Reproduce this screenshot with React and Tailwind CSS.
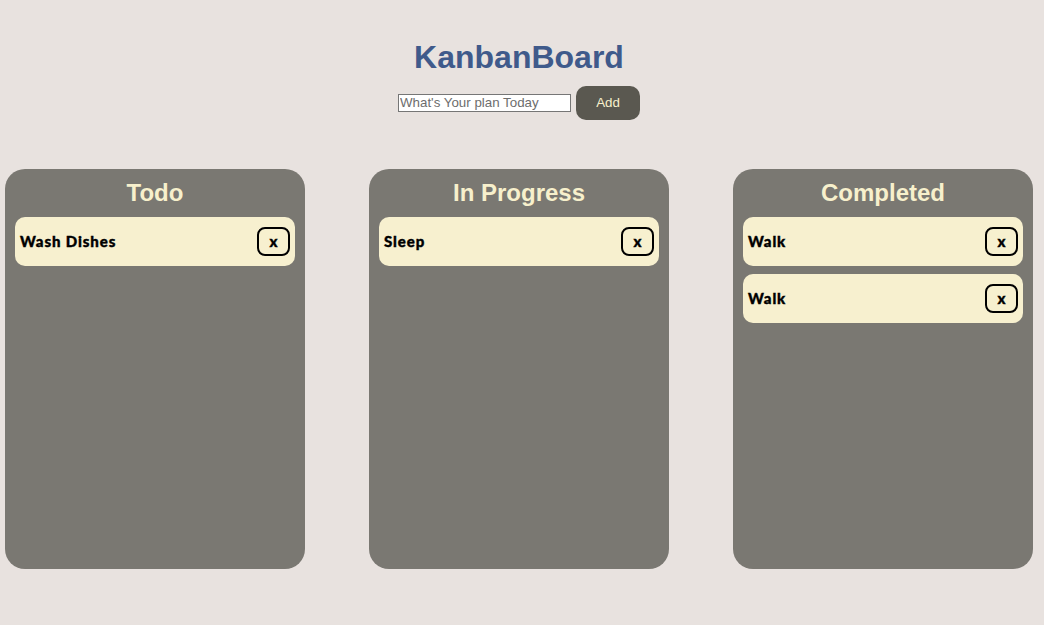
import React from "react";

function Card({ text }) {
  return (
    <div className="flex items-center justify-between h-[49px] rounded-[10px] bg-[#f7f0cf] pl-[5px] pr-[5px]">
      <span className="font-['Lato',sans-serif] font-black text-[15px] tracking-[0.06em] text-black [-webkit-text-stroke:0.4px_black]">{text}</span>
      <button className="w-[33px] h-[29px] border-2 border-black rounded-[8px] bg-transparent font-['Lato',sans-serif] font-black text-[15px] text-black flex items-center justify-center [-webkit-text-stroke:0.4px_black]">x</button>
    </div>
  );
}

function Column({ title, items }) {
  return (
    <div className="w-[300px] h-[400px] rounded-[20px] bg-[#7a7872] px-[10px] pt-[10px] flex flex-col">
      <h2 className="text-center font-['Liberation_Sans',Arial,sans-serif] font-bold text-[24px] leading-[28px] text-[#f7f0cc] mb-[10px]">{title}</h2>
      <div className="flex flex-col gap-[8px]">
        {items.map((t, i) => (
          <Card key={i} text={t} />
        ))}
      </div>
    </div>
  );
}

export default function App() {
  return (
    <div className="min-h-[625px] w-full bg-[#e8e2df] font-['Liberation_Sans',Arial,sans-serif]">
      <div className="w-[1038px]">
        <div className="flex flex-col items-center pt-[39px]">
          <h1 className="text-[32px] leading-[37px] font-bold text-[#3f5a8b]">KanbanBoard</h1>
          <div className="flex items-center gap-[5px] mt-[10px]">
            <input
              placeholder="What's Your plan Today"
              className="w-[173px] h-[18px] border border-[#767676] bg-white px-[1px] text-[13.33px] text-black placeholder:text-[#6d6d6d] outline-none"
            />
            <button className="w-[64px] h-[34px] rounded-[10px] bg-[#5a5850] text-[13.33px] text-[#f7f0cc]">Add</button>
          </div>
        </div>
        <div className="flex justify-center gap-[64px] mt-[49px]">
          <Column title="Todo" items={["Wash Dishes"]} />
          <Column title="In Progress" items={["Sleep"]} />
          <Column title="Completed" items={["Walk", "Walk"]} />
        </div>
      </div>
    </div>
  );
}
